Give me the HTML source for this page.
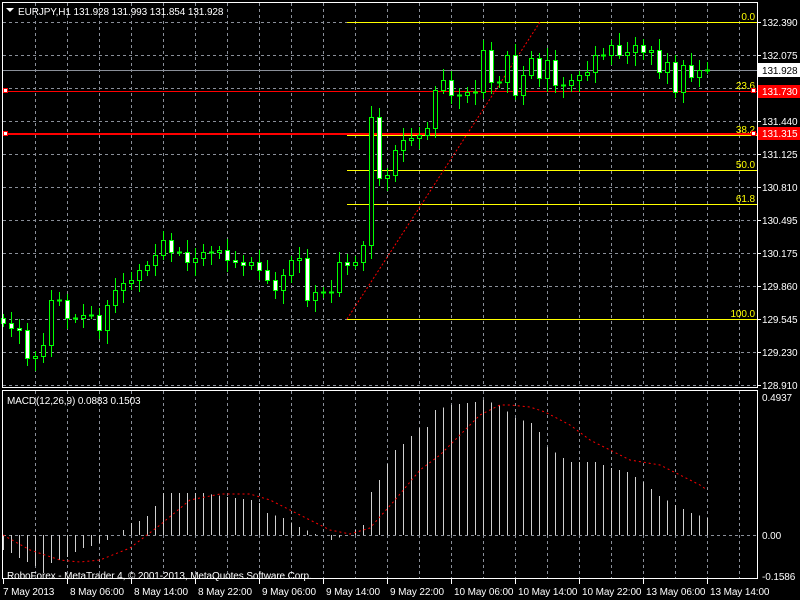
<!DOCTYPE html>
<html><head><meta charset="utf-8">
<style>
html,body{margin:0;padding:0;background:#000;width:800px;height:600px;overflow:hidden}
svg{display:block}
text{font-family:"Liberation Sans",sans-serif;font-size:10px;fill:#fff;letter-spacing:-0.1px}
</style></head><body>
<svg id="s" width="800" height="600" viewBox="0 0 800 600" xmlns="http://www.w3.org/2000/svg">
<rect width="800" height="600" fill="#000"/>
<g id="grid" stroke="#8a8f99" stroke-width="1" stroke-dasharray="3,3"></g>
<g id="fib"></g>
<g id="cand"></g>
<g id="macd"></g>
<rect x="2.5" y="2.5" width="755" height="385" fill="none" stroke="#fff"/>
<rect x="2.5" y="390.5" width="755" height="188" fill="none" stroke="#fff"/>
<g id="txt"></g>
<polygon points="6,8 14,8 10,12" fill="#fff"/>
<text x="18" y="15">EURJPY,H1  131.928 131.993 131.854 131.928</text>
<text x="7" y="404">MACD(12,26,9) 0.0883 0.1503</text>
<text x="7" y="579">RoboForex - MetaTrader 4, © 2001-2013, MetaQuotes Software Corp.</text>
</svg>
<script>
(function(){
var NS="http://www.w3.org/2000/svg";
function el(p,t,a,txt){var e=document.createElementNS(NS,t);for(var k in a)e.setAttribute(k,a[k]);if(txt!=null)e.textContent=txt;document.getElementById(p).appendChild(e);return e;}
var x,y,i;
for(x=35;x<757;x+=32){el('grid','line',{x1:x+.5,y1:3,x2:x+.5,y2:387});el('grid','line',{x1:x+.5,y1:391,x2:x+.5,y2:578});}
var py=[22,55,88,121,154,187,220,253,286,319,352,385];
var pl=["132.390","132.075","","131.440","131.125","130.810","130.495","130.175","129.860","129.545","129.230","128.910"];
py.forEach(function(yy,j){el('grid','line',{x1:3,y1:yy+.5,x2:757,y2:yy+.5});if(pl[j])el('txt','text',{x:762,y:yy+4},pl[j]);el('txt','line',{x1:757,y1:yy+.5,x2:761,y2:yy+.5,stroke:'#fff'});});
el('grid','line',{x1:3,y1:535.5,x2:757,y2:535.5});
el('fib','line',{x1:3,y1:70.5,x2:757,y2:70.5,stroke:'#8a8f99'});
[[22,"0.0"],[91,"23.6"],[135,"38.2"],[170,"50.0"],[204,"61.8"],[319,"100.0"]].forEach(function(f){
el('fib','line',{x1:347,y1:f[0]+.5,x2:757,y2:f[0]+.5,stroke:'#ff0'});
el('txt','text',{x:755,y:f[0]-2,'text-anchor':'end',style:'fill:#ff0'},f[1]);});
el('fib','line',{x1:347,y1:319,x2:540,y2:22,stroke:'#f00','stroke-dasharray':'2,2'});
el('fib','line',{x1:3,y1:91.5,x2:757,y2:91.5,stroke:'#f00'});
el('fib','line',{x1:3,y1:134,x2:757,y2:134,stroke:'#f00','stroke-width':2});
[91,134].forEach(function(yy){el('txt','rect',{x:3.5,y:yy-2.5,width:4,height:4,fill:'#fff',stroke:'#f00'});el('txt','rect',{x:751.5,y:yy-2.5,width:4,height:4,fill:'#fff',stroke:'#f00'});});
el('txt','rect',{x:758,y:63,width:42,height:14,fill:'#fff'});el('txt','text',{x:762,y:74,style:'fill:#000'},"131.928");
el('txt','rect',{x:758,y:85,width:42,height:13,fill:'#f00'});el('txt','text',{x:762,y:95},"131.730");
el('txt','rect',{x:758,y:127,width:42,height:13,fill:'#f00'});el('txt','text',{x:762,y:137},"131.315");
var cl=[323,328,330,358,356,345,300,300,318,318,315,315,330,305,290,283,280,270,265,255,240,252,252,262,258,252,252,250,260,262,265,262,270,280,290,275,260,258,300,292,292,292,262,265,262,245,117,178,175,150,140,138,135,128,90,80,95,95,92,92,50,82,82,55,95,75,58,78,60,85,85,80,75,72,55,55,45,55,52,45,52,50,72,62,92,65,77,70,70];
var o=318;
for(i=0;i<cl.length;i++){x=3+i*8;var c=cl[i];var tp=Math.min(o,c),bt=Math.max(o,c);var hi=tp-4-(i*7%9),lo=bt+4+(i*5%11);
el('cand','line',{x1:x+.5,y1:hi,x2:x+.5,y2:lo,stroke:'#0f0'});
if(bt-tp<2){el('cand','line',{x1:x-2,y1:c+.5,x2:x+3,y2:c+.5,stroke:'#0f0','stroke-width':2});}
else el('cand','rect',{x:x-1.5,y:tp+.5,width:4,height:bt-tp,fill:(c>o?'#fff':'#000'),stroke:'#0f0'});
o=c;}
function interp(pts,xx){for(var j=0;j<pts.length-1;j++){if(xx<=pts[j+1][0]){var a=pts[j],b=pts[j+1];return a[1]+(b[1]-a[1])*(xx-a[0])/(b[0]-a[0]);}}return pts[pts.length-1][1];}
var H=[[3,550],[11,553],[19,558],[27,562],[35,566],[43,573],[51,563],[59,560],[67,557],[75,552],[83,548],[91,546],[99,543],[107,540],[115,535],[123,530],[131,523],[139,521],[147,516],[155,506],[163,493],[203,493],[227,497],[251,500],[259,503],[267,513],[283,518],[299,527],[315,534],[323,535],[331,540],[347,535],[355,530],[363,525],[371,492],[379,480],[387,464],[395,450],[403,444],[419,428],[427,427],[435,410],[451,405],[475,402],[483,400],[499,405],[515,418],[531,423],[539,432],[547,447],[563,458],[571,462],[595,462],[611,468],[627,472],[643,482],[659,496],[675,505],[691,513],[707,518]];
for(x=3;x<=707;x+=8){y=interp(H,x);el('macd','line',{x1:x+.5,y1:535,x2:x+.5,y2:y,stroke:'#d0d0d0'});}
var S=[[3,535],[30,550],[60,560],[80,562],[100,560],[130,548],[160,525],[190,500],[220,494],[250,494],[270,500],[300,515],[330,530],[350,534],[370,528],[395,500],[420,470],[440,455],[460,435],[480,415],[500,405],[510,405],[530,407],[545,412],[570,425],[590,440],[610,450],[630,460],[660,465],[680,475],[700,485],[707,490]];
el('macd','polyline',{points:S.map(function(p){return p.join(',')}).join(' '),fill:'none',stroke:'#f00','stroke-dasharray':'2,3'});
el('txt','text',{x:762,y:401},"0.4937");el('txt','text',{x:762,y:539},"0.00");el('txt','text',{x:762,y:580},"-0.1586");
var tl=["7 May 2013","8 May 06:00","8 May 14:00","8 May 22:00","9 May 06:00","9 May 14:00","9 May 22:00","10 May 06:00","10 May 14:00","10 May 22:00","13 May 06:00","13 May 14:00"];
tl.forEach(function(t,j){var xx=j==0?3:3+j*64;el('txt','line',{x1:xx+.5,y1:579,x2:xx+.5,y2:584,stroke:'#fff'});el('txt','text',{x:xx+(j==0?0:3),y:595},t);});
})();
</script>
</body></html>
